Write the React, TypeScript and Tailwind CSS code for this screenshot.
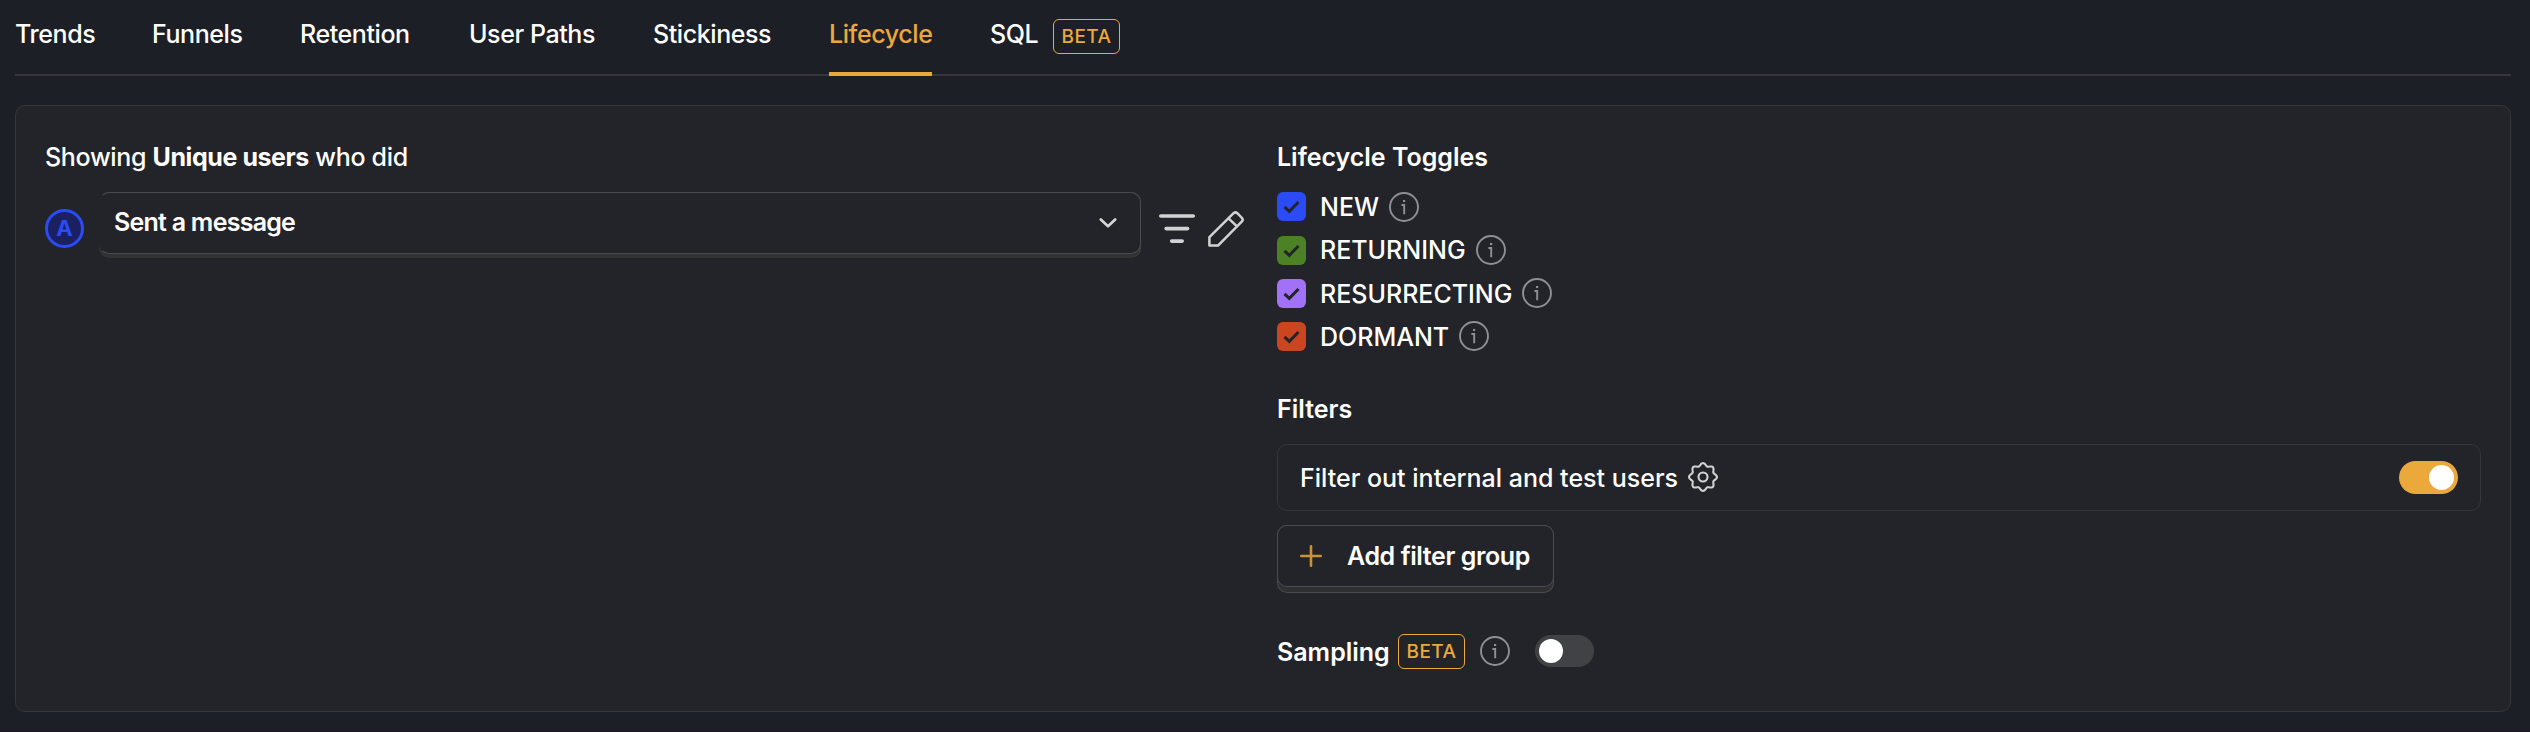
import React from "react";

function InfoIcon({ className = "" }: { className?: string }) {
  return (
    <svg viewBox="0 0 30 30" className={`h-[30px] w-[30px] shrink-0 text-[#8f9093] ${className}`} fill="none" stroke="currentColor" strokeWidth="1.9">
      <circle cx="15" cy="15" r="14" />
      <path d="M12.4 13h2.8v9.2" />
      <path d="M14 9h2.2" strokeWidth="2.1" />
    </svg>
  );
}

const gearPath =
  Array.from({ length: 120 }, (_, i) => {
    const a = (i / 120) * Math.PI * 2;
    const r = 12.6 + 1.35 * Math.cos(8 * a);
    return `${i === 0 ? "M" : "L"}${(15 + r * Math.cos(a)).toFixed(2)} ${(15 + r * Math.sin(a)).toFixed(2)}`;
  }).join("") + "Z";

function Beta({ className = "" }: { className?: string }) {
  return (
    <span className={`flex h-[35px] w-[67px] shrink-0 items-center justify-center rounded-[6px] border border-[#eba93b] pt-px text-[19px] font-medium tracking-[0.5px] text-[#eba93b] ${className}`}>
      BETA
    </span>
  );
}

function Tab({ label, width, active = false }: { label: string; width: string; active?: boolean }) {
  return (
    <div className={`flex h-[76px] shrink-0 items-start border-b-4 pt-[14px] leading-10 whitespace-nowrap ${width} ${active ? "border-[#eba93b] text-[#eba93b]" : "border-transparent"}`}>
      {label}
    </div>
  );
}

function Toggle({ label, color }: { label: string; color: string }) {
  return (
    <div className="flex h-[43.2px] items-center">
      <span className={`flex h-[29px] w-[29px] items-center justify-center rounded-[6px] ${color}`}>
        <svg viewBox="0 0 29 29" className="h-[29px] w-[29px]" fill="none" stroke="#232429" strokeWidth="3">
          <path d="M7.5 14.8 12.3 19.3 21.5 10" />
        </svg>
      </span>
      <span className="ml-[14px] pt-[2px] font-medium">{label}</span>
      <InfoIcon className="ml-[10px]" />
    </div>
  );
}

export default function App() {
  return (
    <div className="flex h-[732px] w-[2530px] flex-col overflow-hidden border-b border-[#1f1426] bg-[#1d1f27] pr-[19px] pl-[15px] font-[Inter,'Liberation_Sans',sans-serif] text-[25px] text-white">
      <nav className="flex h-[76px] shrink-0 bg-[linear-gradient(#35373b,#35373b)] bg-[length:100%_2px] bg-bottom bg-no-repeat font-[450] tracking-[-0.42px]">
        <div className="flex gap-[58px]">
          <Tab label="Trends" width="w-[79px]" />
          <Tab label="Funnels" width="w-[90px]" />
          <Tab label="Retention" width="w-[111px]" />
          <Tab label="User Paths" width="w-[126px]" />
          <Tab label="Stickiness" width="w-[118px]" />
          <Tab label="Lifecycle" width="w-[103px]" active />
          <div className="flex">
            <Tab label="SQL" width="w-[63px]" />
            <Beta className="mt-[19px]" />
          </div>
        </div>
      </nav>

      <main className="mt-[29px] flex h-[607px] w-[2496px] shrink-0 rounded-[10px] border border-[#35373b] bg-[#232429] pl-[29px]">
        <section className="w-[1232px] shrink-0 pt-[31px]">
          <p className="h-10 leading-10 font-[450] tracking-[-0.32px] whitespace-nowrap">
            Showing <b className="font-bold tracking-[-0.42px]">Unique users</b> who did
          </p>
          <div className="mt-[15px] flex">
            <span className="mt-[17px] flex h-[39px] w-[39px] shrink-0 items-center justify-center rounded-full border-3 border-[#2b4bf7] bg-[#1b2160] text-[22px] font-bold text-[#2b4bf7]">
              A
            </span>
            <button className="ml-[15px] flex h-[66px] w-[1042px] shrink-0 flex-col items-stretch justify-start rounded-[10px] border-r border-[#44454a] bg-[#323232] text-left">
              <span className="mr-[-1px] flex h-[62px] shrink-0 items-center justify-between rounded-[10px] border border-[#4a4b50] border-l-transparent bg-[#232429] pr-[23px] pl-[14px] font-semibold tracking-[-0.75px]">
                Sent a message
                <svg viewBox="0 0 18 10" className="h-[10px] w-[18px]" fill="none" stroke="#d6d6d6" strokeWidth="2.6" strokeLinecap="round" strokeLinejoin="round">
                  <path d="M1.8 1.5 9 8.3 16.2 1.5" />
                </svg>
              </span>
            </button>
            <svg viewBox="0 0 38 30" className="mt-[22px] ml-[17px] h-[30px] w-[38px] shrink-0" stroke="#d2d2d2" strokeWidth="3.6" strokeLinecap="round">
              <path d="M2.8 2H35.3M8.1 14.6H29.6M13.7 27.1H24.2" />
            </svg>
            <svg viewBox="0 0 36 36" className="mt-[19px] ml-[12px] h-[36px] w-[36px] shrink-0" fill="none" stroke="#d2d2d2" strokeWidth="2.5" strokeLinejoin="round">
              <path d="M1.4 34.6V26.2L25.6 2.2Q27.5.6 29.3 2.2L34 7Q35.4 8.6 34 10.4L10 34.6Z" />
              <path d="M20.6 7.4 28.9 15.4" />
            </svg>
          </div>
        </section>

        <section className="w-[1204px] pt-[31px]">
          <h4 className="h-10 leading-10 font-semibold tracking-[-0.02px]">Lifecycle Toggles</h4>
          <div className="mt-[8.3px]">
            <Toggle label="NEW" color="bg-[#2b4bf7]" />
            <Toggle label="RETURNING" color="bg-[#4c8225]" />
            <Toggle label="RESURRECTING" color="bg-[#a171f8]" />
            <Toggle label="DORMANT" color="bg-[#cb4521]" />
          </div>
          <h4 className="mt-[30.9px] h-10 leading-10 font-semibold">Filters</h4>
          <div className="mt-[15px] flex h-[67px] items-center rounded-[10px] border border-[#35363a] pr-[22px] pl-[22px]">
            <span className="pt-[2px] font-medium whitespace-nowrap">Filter out internal and test users</span>
            <svg viewBox="0 0 30 30" className="ml-[10px] h-[30px] w-[30px]" fill="none" stroke="#d2d2d2" strokeWidth="2.1" strokeLinejoin="round">
              <path d={gearPath} />
              <circle cx="15" cy="15" r="4.5" />
            </svg>
            <span className="ml-auto flex h-[33px] w-[59px] items-center justify-end rounded-full bg-[#eba93b] pr-[4px]">
              <span className="h-[25px] w-[25px] rounded-full bg-white" />
            </span>
          </div>
          <button className="mt-[14px] flex h-[68px] w-[277px] flex-col items-stretch justify-start rounded-[10px] border border-t-0 border-[#4a4b50] bg-[#303031] text-left">
            <span className="-mx-px flex h-[62px] shrink-0 items-center rounded-[10px] border border-[#4a4b50] bg-[#232429] pl-[22px] font-semibold tracking-[-0.4px] whitespace-nowrap">
              <svg viewBox="0 0 22 22" className="mr-[25px] h-[22px] w-[22px] shrink-0" stroke="#c9923a" strokeWidth="2.6" strokeLinecap="round">
                <path d="M11 1.3V20.7M1.3 11H20.7" />
              </svg>
              <span className="pt-[2px]">Add filter group</span>
            </span>
          </button>
          <div className="mt-[40px] flex h-[37px] items-center">
            <span className="w-[121px] pt-[2px] font-semibold">Sampling</span>
            <Beta />
            <InfoIcon className="ml-[15px]" />
            <span className="ml-[25px] flex h-[32px] w-[59px] items-center rounded-full bg-[#414246] pl-[4px]">
              <span className="h-[24px] w-[24px] rounded-full bg-white" />
            </span>
          </div>
        </section>
      </main>
    </div>
  );
}
